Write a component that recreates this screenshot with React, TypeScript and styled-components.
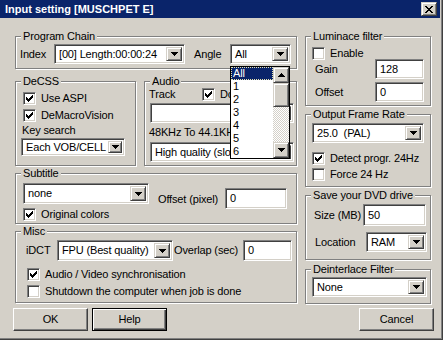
import React from 'react';
import styled, { createGlobalStyle, css } from 'styled-components';

const FACE = '#d4d0c8';
const SHADOW = '#808080';
const DARK = '#404040';
const NAVY = '#0a246a';

const GlobalStyle = createGlobalStyle`
  html, body {
    margin: 0;
    padding: 0;
    background: ${FACE};
  }
  body {
    font-family: "Liberation Sans", Arial, sans-serif;
    font-size: 11px;
    letter-spacing: -0.15px;
    color: #000;
  }
`;

const Window = styled.div`
  width: 443px;
  height: 340px;
  box-sizing: border-box;
  background: ${FACE};
  border-right: 1px solid ${DARK};
  border-bottom: 1px solid ${DARK};
`;

const Frame = styled.div`
  height: 100%;
  box-sizing: border-box;
  border-right: 1px solid ${SHADOW};
  border-bottom: 1px solid ${SHADOW};
  padding-right: 1px;
  display: flex;
  flex-direction: column;
`;

const TitleBar = styled.div`
  height: 18px;
  flex-shrink: 0;
  background: ${NAVY};
  display: flex;
  align-items: center;
  padding: 0 3px 0 5px;
`;

const Title = styled.div`
  flex: 1;
  color: #fff;
  font-weight: bold;
  letter-spacing: 0;
  line-height: 13px;
`;

const raised = css`
  background: ${FACE};
  border: 1px solid;
  border-color: ${FACE} ${DARK} ${DARK} ${FACE};
  box-shadow: inset 1px 1px #fff, inset -1px -1px ${SHADOW};
`;

const CloseButton = styled.div`
  width: 16px;
  height: 14px;
  box-sizing: border-box;
  ${raised};
  display: flex;
  align-items: center;
  justify-content: center;
`;

const Body = styled.div`
  display: flex;
  gap: 8px;
  padding: 18px 0 0 15px;
`;

const Column = styled.div<{ $w: number }>`
  width: ${(p) => p.$w}px;
  display: flex;
  flex-direction: column;
`;

const Group = styled.div<{ $w?: number; $h: number; $mt?: number }>`
  box-sizing: border-box;
  width: ${(p) => (p.$w ? `${p.$w}px` : 'auto')};
  height: ${(p) => p.$h}px;
  margin-top: ${(p) => p.$mt ?? 0}px;
  border: 1px solid ${SHADOW};
  box-shadow: inset 1px 1px #fff, 1px 1px #fff;
  display: flex;
  flex-direction: column;
  align-items: flex-start;
  flex-shrink: 0;
`;

const Caption = styled.div`
  margin: -7px 0 0 5px;
  padding: 0 2px;
  line-height: 13px;
  background: ${FACE};
  white-space: nowrap;
`;

const Pair = styled.div<{ $mt?: number }>`
  display: flex;
  gap: 8px;
  margin-top: ${(p) => p.$mt ?? 0}px;
`;

const Row = styled.div<{ $mt?: number; $ml?: number; $top?: boolean }>`
  display: flex;
  align-items: ${(p) => (p.$top ? 'flex-start' : 'center')};
  margin: ${(p) => p.$mt ?? 0}px 0 0 ${(p) => p.$ml ?? 0}px;
`;

const Stack = styled.div<{ $ml?: number }>`
  display: flex;
  flex-direction: column;
  margin-left: ${(p) => p.$ml ?? 0}px;
`;

const Label = styled.div<{ $w?: number; $ml?: number; $mt?: number }>`
  width: ${(p) => (p.$w ? `${p.$w}px` : 'auto')};
  margin: ${(p) => p.$mt ?? 0}px 0 0 ${(p) => p.$ml ?? 0}px;
  flex-shrink: 0;
  line-height: 13px;
  white-space: nowrap;
`;

const Field = styled.div<{ $w: number; $h: number; $ml?: number; $mt?: number }>`
  box-sizing: border-box;
  width: ${(p) => p.$w}px;
  height: ${(p) => p.$h}px;
  margin: ${(p) => p.$mt ?? 0}px 0 0 ${(p) => p.$ml ?? 0}px;
  flex-shrink: 0;
  background: #fff;
  border: 1px solid;
  border-color: ${SHADOW} #fff #fff ${SHADOW};
  box-shadow: inset 1px 1px ${DARK}, inset -1px -1px ${FACE};
  padding: 2px;
  display: flex;
  align-items: center;
`;

const FieldText = styled.div`
  flex: 1;
  padding-left: 2px;
  line-height: 13px;
  overflow: hidden;
  white-space: pre;
`;

const DropButton = styled.div<{ $bw?: number }>`
  box-sizing: border-box;
  width: ${(p) => p.$bw ?? 16}px;
  align-self: stretch;
  flex-shrink: 0;
  ${raised};
  display: flex;
  align-items: center;
  justify-content: center;
`;

const ComboAnchor = styled.div`
  position: relative;
  flex-shrink: 0;
`;

const DropList = styled.div`
  position: absolute;
  top: 22px;
  left: 0;
  width: 60px;
  height: 93px;
  box-sizing: border-box;
  border: 1px solid #000;
  background: #fff;
  display: flex;
  z-index: 2;
`;

const ListItems = styled.div`
  flex: 1;
  display: flex;
  flex-direction: column;
`;

const ListItem = styled.div<{ $selected?: boolean }>`
  height: 13px;
  line-height: 13px;
  padding-left: 2px;
  ${(p) =>
    p.$selected &&
    css`
      background: ${NAVY};
      color: #fff;
      outline: 1px dotted #e8e4b0;
      outline-offset: -1px;
    `}
`;

const ScrollBar = styled.div`
  width: 16px;
  display: flex;
  flex-direction: column;
`;

const ScrollButton = styled.div`
  box-sizing: border-box;
  height: 16px;
  ${raised};
  display: flex;
  align-items: center;
  justify-content: center;
`;

const Thumb = styled.div`
  box-sizing: border-box;
  height: 24px;
  ${raised};
`;

const Track = styled.div`
  flex: 1;
  background: repeating-conic-gradient(#fff 0 25%, ${FACE} 0 50%) 0 0 / 2px 2px;
`;

const CheckRow = styled.div<{ $mt?: number; $ml?: number }>`
  display: flex;
  align-items: center;
  gap: 5px;
  height: 13px;
  margin: ${(p) => p.$mt ?? 0}px 0 0 ${(p) => p.$ml ?? 0}px;
  line-height: 13px;
  white-space: nowrap;
`;

const Box = styled.div`
  box-sizing: border-box;
  width: 13px;
  height: 13px;
  flex-shrink: 0;
  background: #fff;
  border: 1px solid;
  border-color: ${SHADOW} #fff #fff ${SHADOW};
  box-shadow: inset 1px 1px ${DARK}, inset -1px -1px ${FACE};
  display: flex;
  align-items: center;
  justify-content: center;
`;

const ButtonRow = styled.div<{ $mt?: number; $ml?: number }>`
  display: flex;
  gap: 4px;
  margin: ${(p) => p.$mt ?? 0}px 0 0 ${(p) => p.$ml ?? 0}px;
`;

const PushButton = styled.div<{ $default?: boolean; $right?: boolean; $mt?: number }>`
  box-sizing: border-box;
  width: 75px;
  height: 23px;
  flex-shrink: 0;
  margin-top: ${(p) => p.$mt ?? 0}px;
  align-self: ${(p) => (p.$right ? 'flex-end' : 'auto')};
  background: ${FACE};
  display: flex;
  align-items: center;
  justify-content: center;
  line-height: 13px;
  ${(p) =>
    p.$default
      ? css`
          border: 1px solid #000;
          box-shadow: inset 1px 1px #fff, inset -1px -1px ${DARK}, inset -2px -2px ${SHADOW};
        `
      : css`
          border: 1px solid;
          border-color: #fff ${DARK} ${DARK} #fff;
          box-shadow: inset -1px -1px ${SHADOW};
        `}
`;

const ArrowDown = () => (
  <svg width="7" height="4" viewBox="0 0 7 4" shapeRendering="crispEdges">
    <path d="M0 0h7v1H0zM1 1h5v1H1zM2 2h3v1H2zM3 3h1v1H3z" fill="#000" />
  </svg>
);

const ArrowUp = () => (
  <svg width="7" height="4" viewBox="0 0 7 4" shapeRendering="crispEdges">
    <path d="M3 0h1v1H3zM2 1h3v1H2zM1 2h5v1H1zM0 3h7v1H0z" fill="#000" />
  </svg>
);

const CheckMark = () => (
  <svg width="7" height="7" viewBox="0 0 7 7" shapeRendering="crispEdges">
    <path
      d="M0 2h1v3H0zM1 3h1v3H1zM2 4h1v3H2zM3 3h1v3H3zM4 2h1v3H4zM5 1h1v3H5zM6 0h1v3H6z"
      fill="#000"
    />
  </svg>
);

const CloseGlyph = () => (
  <svg width="8" height="7" viewBox="0 0 8 7" shapeRendering="crispEdges">
    <path
      d="M0 0h2v1H0zM6 0h2v1H6zM1 1h2v1H1zM5 1h2v1H5zM2 2h4v1H2zM3 3h2v1H3zM2 4h4v1H2zM1 5h2v1H1zM5 5h2v1H5zM0 6h2v1H0zM6 6h2v1H6z"
      fill="#000"
    />
  </svg>
);

interface ComboProps {
  value: string;
  w: number;
  h?: number;
  ml?: number;
  mt?: number;
  bw?: number;
}

function Combo({ value, w, h = 21, ml, mt, bw }: ComboProps) {
  return (
    <Field $w={w} $h={h} $ml={ml} $mt={mt}>
      <FieldText>{value}</FieldText>
      <DropButton $bw={bw}>
        <ArrowDown />
      </DropButton>
    </Field>
  );
}

function Edit({ value, w, h = 21, ml, mt }: ComboProps) {
  return (
    <Field $w={w} $h={h} $ml={ml} $mt={mt}>
      <FieldText>{value}</FieldText>
    </Field>
  );
}

function Check({ label, checked, ml, mt }: { label: string; checked?: boolean; ml?: number; mt?: number }) {
  return (
    <CheckRow $ml={ml} $mt={mt}>
      <Box>{checked && <CheckMark />}</Box>
      <span>{label}</span>
    </CheckRow>
  );
}

const angles = ['All', '1', '2', '3', '4', '5', '6'];

export default function App() {
  return (
    <>
      <GlobalStyle />
      <Window>
        <Frame>
          <TitleBar>
            <Title>Input setting [MUSCHPET E]</Title>
            <CloseButton>
              <CloseGlyph />
            </CloseButton>
          </TitleBar>
          <Body>
            <Column $w={282}>
              <Group $h={33}>
                <Caption>Program Chain</Caption>
                <Row $mt={1} $ml={4}>
                  <Label $w={34}>Index</Label>
                  <Combo value="[00] Length:00:00:24" w={131} h={20} />
                  <Label $w={36} $ml={9}>
                    Angle
                  </Label>
                  <ComboAnchor>
                    <Combo value="All" w={61} h={20} />
                    <DropList>
                      <ListItems>
                        {angles.map((a, i) => (
                          <ListItem key={a} $selected={i === 0}>
                            {a}
                          </ListItem>
                        ))}
                      </ListItems>
                      <ScrollBar>
                        <ScrollButton>
                          <ArrowUp />
                        </ScrollButton>
                        <Thumb />
                        <Track />
                        <ScrollButton>
                          <ArrowDown />
                        </ScrollButton>
                      </ScrollBar>
                    </DropList>
                  </ComboAnchor>
                </Row>
              </Group>

              <Pair $mt={12}>
                <Group $w={121} $h={85}>
                  <Caption>DeCSS</Caption>
                  <Check label="Use ASPI" checked ml={7} mt={4} />
                  <Check label="DeMacroVision" checked ml={7} mt={4} />
                  <Label $ml={6} $mt={2}>
                    Key search
                  </Label>
                  <Combo value="Each VOB/CELL" w={104} h={18} ml={5} mt={1} bw={14} />
                </Group>
                <Group $w={153} $h={85}>
                  <Caption>Audio</Caption>
                  <Row $ml={4}>
                    <Label $w={53}>Track</Label>
                    <Check label="Downsampled" checked />
                  </Row>
                  <Combo value="" w={144} h={20} ml={5} mt={2} />
                  <Label $ml={4} $mt={3}>
                    48KHz To 44.1KHz
                  </Label>
                  <Combo value="High quality (slow)" w={144} h={20} ml={5} mt={3} />
                </Group>
              </Pair>

              <Group $h={51} $mt={7}>
                <Caption>Subtitle</Caption>
                <Row $mt={3} $top>
                  <Stack $ml={7}>
                    <Combo value="none" w={126} h={21} />
                    <Check label="Original colors" checked mt={4} />
                  </Stack>
                  <Label $w={67} $ml={9} $mt={10}>
                    Offset (pixel)
                  </Label>
                  <Edit value="0" w={62} h={21} mt={5} />
                </Row>
              </Group>

              <Group $h={72} $mt={7}>
                <Caption>Misc</Caption>
                <Row $mt={2} $ml={10}>
                  <Label $w={31}>iDCT</Label>
                  <Combo value="FPU (Best quality)" w={116} h={21} />
                  <Label $w={69} $ml={1}>
                    Overlap (sec)
                  </Label>
                  <Edit value="0" w={49} h={21} />
                </Row>
                <Check label="Audio / Video synchronisation" checked ml={11} mt={7} />
                <Check label="Shutdown the computer when job is done" ml={11} mt={4} />
              </Group>

              <ButtonRow $mt={5} $ml={-2}>
                <PushButton>OK</PushButton>
                <PushButton $default>Help</PushButton>
              </ButtonRow>
            </Column>

            <Column $w={129}>
              <Group $w={126} $h={70}>
                <Caption>Luminace filter</Caption>
                <Check label="Enable" ml={6} mt={4} />
                <Row $mt={-1} $ml={9}>
                  <Label $w={60}>Gain</Label>
                  <Edit value="128" w={49} h={20} />
                </Row>
                <Row $mt={3} $ml={9}>
                  <Label $w={60}>Offset</Label>
                  <Edit value="0" w={49} h={20} />
                </Row>
              </Group>

              <Group $w={126} $h={73} $mt={8}>
                <Caption>Output Frame Rate</Caption>
                <Combo value="25.0  (PAL)" w={112} h={20} ml={6} mt={2} />
                <Check label="Detect progr. 24Hz" checked ml={6} mt={9} />
                <Check label="Force 24 Hz" ml={6} mt={3} />
              </Group>

              <Group $w={126} $h={65} $mt={8}>
                <Caption>Save your DVD drive</Caption>
                <Row $mt={2} $ml={8}>
                  <Label $w={49}>Size (MB)</Label>
                  <Edit value="50" w={63} h={22} />
                </Row>
                <Row $mt={6} $ml={9}>
                  <Label $w={51}>Location</Label>
                  <Combo value="RAM" w={61} h={20} />
                </Row>
              </Group>

              <Group $w={126} $h={35} $mt={9}>
                <Caption>Deinterlace Filter</Caption>
                <Combo value="None" w={115} h={20} ml={6} mt={1} />
              </Group>

              <PushButton $right $mt={4}>
                Cancel
              </PushButton>
            </Column>
          </Body>
        </Frame>
      </Window>
    </>
  );
}
